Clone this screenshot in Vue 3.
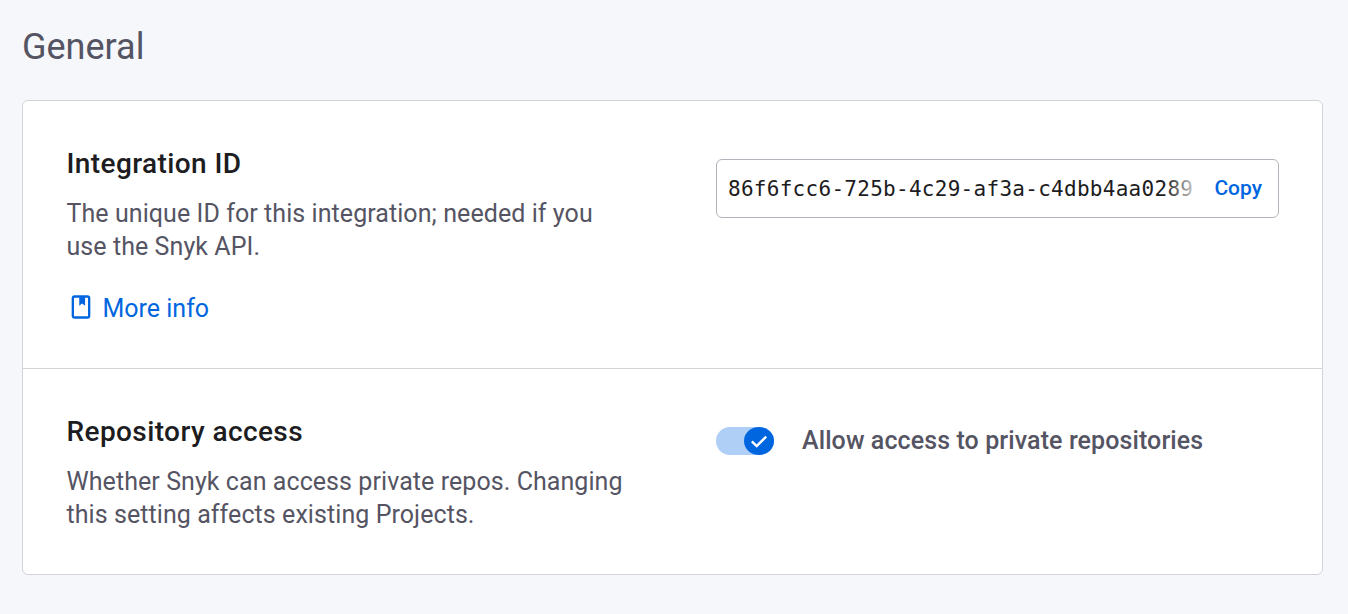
<script setup>
const integrationId = '86f6fcc6-725b-4c29-af3a-c4dbb4aa0289'
</script>

<template>
  <main class="page">
    <h1 class="title">General</h1>
    <section class="card">
      <div class="row row-first">
        <div class="info">
          <h2 class="heading">Integration ID</h2>
          <p class="desc">The unique ID for this integration; needed if you use the Snyk API.</p>
          <a class="link" href="#">
            <svg class="book" width="28" height="28" viewBox="0 0 24 24" fill="none">
              <path d="M6.5 2h11A2.5 2.5 0 0 1 20 4.500v15a2.500 2.500 0 0 1-2.500 2.500h-11A2.500 2.500 0 0 1 4 19.500v-15A2.500 2.500 0 0 1 6.500 2Zm0 2a.5.5 0 0 0-.5.500v15a.5.5 0 0 0 .5.500h11a.5.5 0 0 0 .5-.5v-15a.5.5 0 0 0-.5-.5H15.500v7l-2.500-2-2.500 2V4H6.500Z" fill="#0066e0" fill-rule="evenodd"/>
            </svg>
            <span>More info</span>
          </a>
        </div>
        <div class="control">
          <div class="copy-field">
            <div class="id-wrap"><span class="id">{{ integrationId }}</span><span class="fade"></span></div>
            <button class="copy" type="button">Copy</button>
          </div>
        </div>
      </div>
      <div class="row row-second">
        <div class="info">
          <h2 class="heading">Repository access</h2>
          <p class="desc">Whether Snyk can access private repos. Changing this setting affects existing Projects.</p>
        </div>
        <div class="control">
          <label class="toggle-line">
            <span class="track">
              <span class="knob">
                <svg width="22" height="22" viewBox="0 0 16 16" fill="none">
                  <path d="M2.800 8.300 6.300 11.700 13.200 4.800" stroke="#fff" stroke-width="1.800"/>
                </svg>
              </span>
            </span>
            <span class="toggle-label">Allow access to private repositories</span>
          </label>
        </div>
      </div>
    </section>
  </main>
</template>

<style>
html, body { margin: 0; background: #f6f7fb; }
</style>

<style scoped>
.page {
  box-sizing: border-box;
  height: 614px;
  padding: 24px 25px 0 22px;
  background: #f6f7fb;
  font-family: Roboto, "Liberation Sans", sans-serif;
  overflow: hidden;
}
.title {
  margin: 0 0 30px;
  font-size: 36px;
  line-height: 46px;
  font-weight: 400;
  color: #555463;
}
.card {
  background: #fff;
  border: 1px solid #d3d3d9;
  border-radius: 6px;
}
.row {
  display: flex;
  padding: 0 44px 0 43.500px;
}
.row-first {
  height: 268px;
  padding-top: 46px;
  box-sizing: border-box;
  border-bottom: 1px solid #d3d3d9;
}
.row-second {
  height: 205px;
  padding-top: 46px;
  box-sizing: border-box;
}
.info { width: 649.500px; flex: none; }
.heading {
  margin: 0;
  font-size: 28px;
  line-height: 34px;
  font-weight: 500;
  letter-spacing: 0.4px;
  color: #1c1c21;
}
.desc {
  margin: 16px 0 0;
  width: 565px;
  font-size: 25px;
  line-height: 33px;
  letter-spacing: 0.07px;
  color: #555463;
}
.link {
  display: flex;
  align-items: center;
  gap: 8px;
  margin-top: 30px;
  font-size: 25px;
  line-height: 32px;
  color: #0066e0;
  text-decoration: none;
}
.book { margin-bottom: 4px; }
.control { flex: 1; min-width: 0; margin-right: -1px; }
.copy-field {
  display: flex;
  align-items: center;
  box-sizing: border-box;
  height: 59px;
  margin-top: 12px;
  padding: 0 16px 0 11px;
  border: 1px solid #b3b3bb;
  border-radius: 6px;
  background: #fff;
}
.id-wrap {
  position: relative;
  flex: 1;
  min-width: 0;
  overflow: hidden;
  white-space: nowrap;
}
.id {
  font-family: "DejaVu Sans Mono", "Liberation Mono", monospace;
  font-size: 21px;
  letter-spacing: 0.28px;
  color: #1c1c21;
}
.fade {
  position: absolute;
  top: 0;
  right: 0;
  bottom: 0;
  width: 28px;
  background: linear-gradient(to right, rgba(255,255,255,0), rgba(255,255,255,.75));
}
.copy {
  margin-left: 21px;
  padding: 0 0 2px;
  border: 0;
  background: none;
  font-family: inherit;
  font-size: 21px;
  font-weight: 500;
  color: #0066e0;
}
.toggle-line {
  display: flex;
  align-items: center;
  gap: 28px;
  margin-top: 10px;
}
.track {
  position: relative;
  display: block;
  width: 58px;
  height: 28px;
  border-radius: 14px;
  background: #b0cff6;
}
.knob {
  position: absolute;
  top: 0;
  right: 0;
  display: flex;
  align-items: center;
  justify-content: center;
  width: 30px;
  height: 28px;
  border-radius: 50%;
  background: #0066e0;
}
.toggle-label {
  font-size: 25px;
  line-height: 32px;
  font-weight: 500;
  letter-spacing: 0.1px;
  color: #555463;
}
</style>
